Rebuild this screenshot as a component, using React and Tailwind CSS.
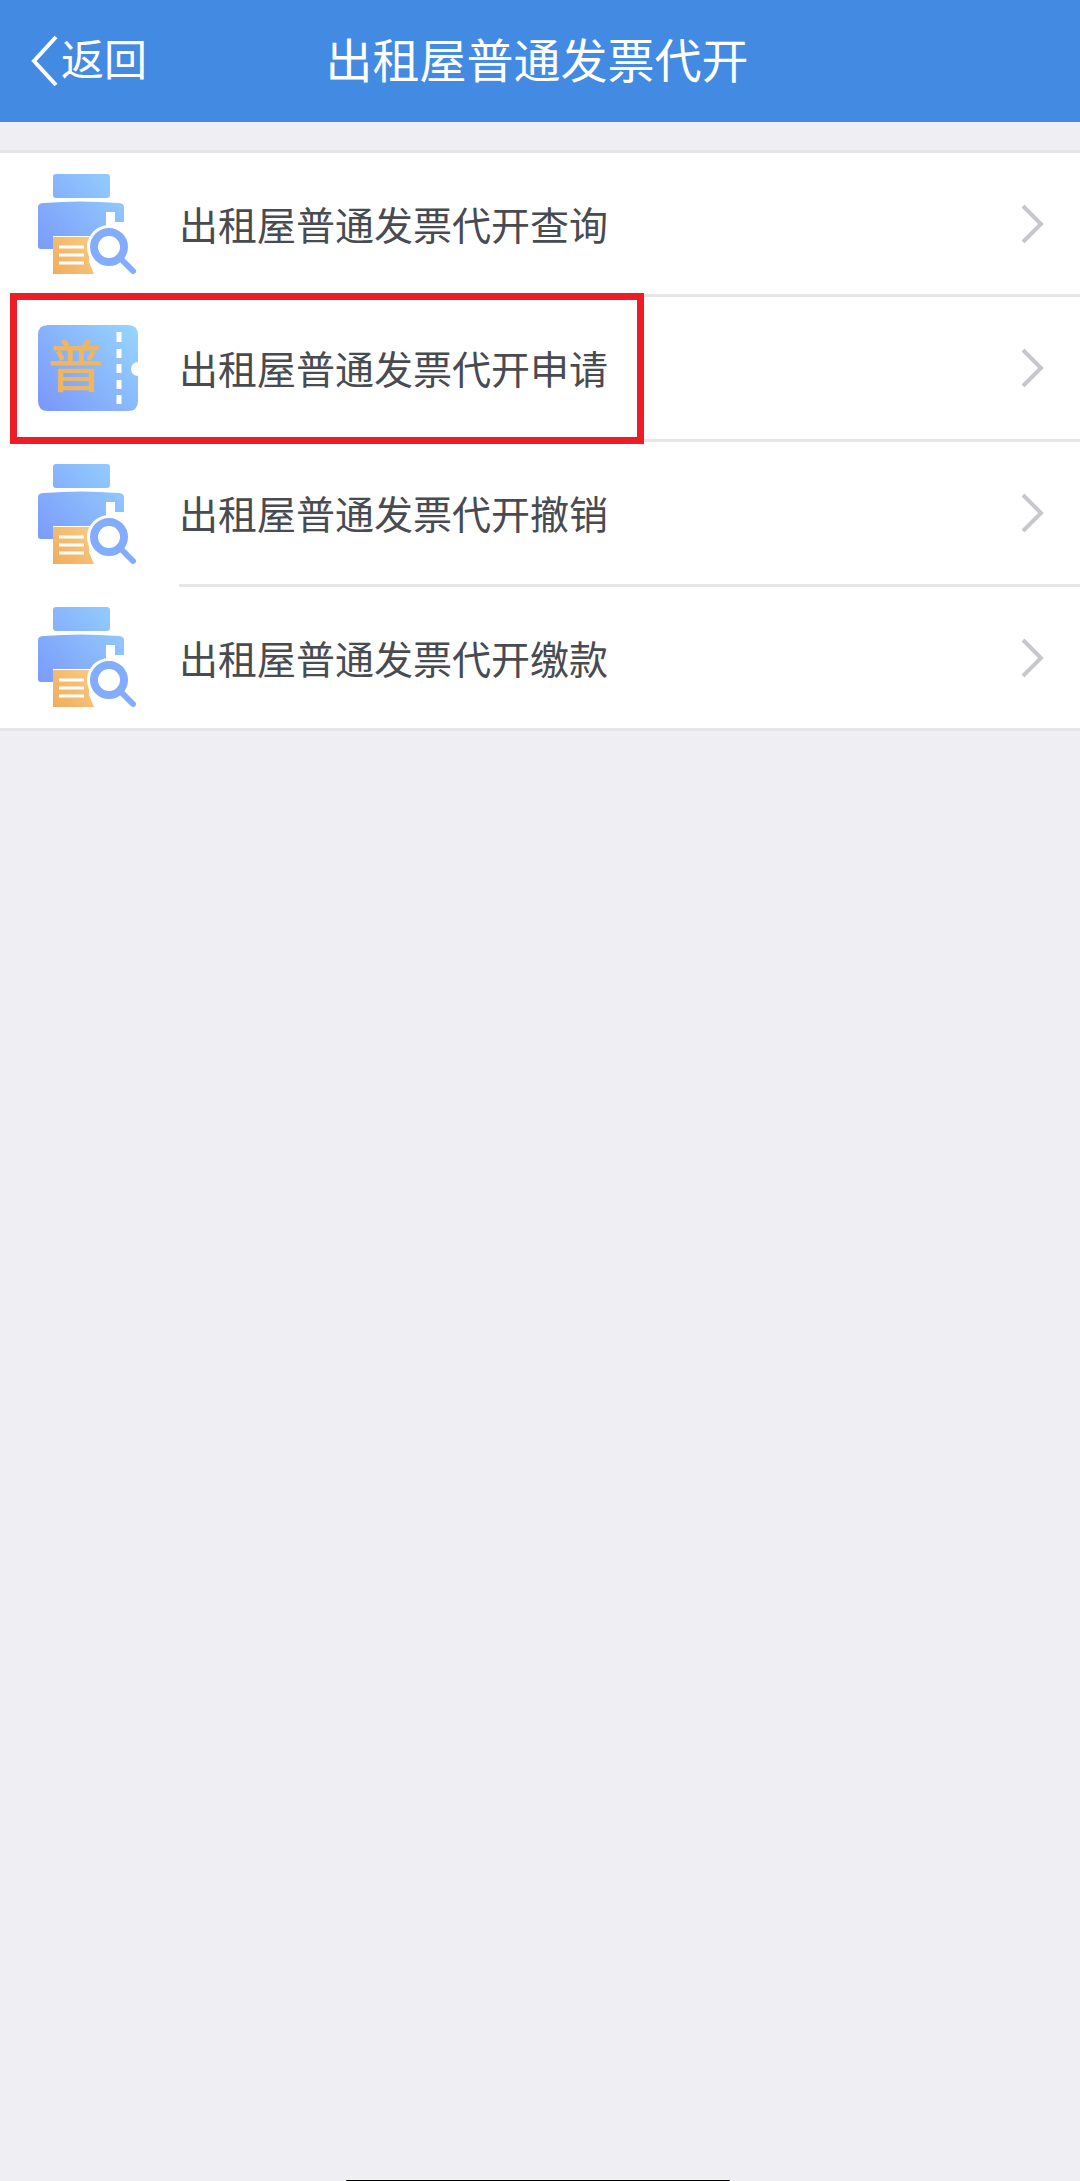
const rows = [
    { label: '出租屋普通发票代开查询', icon: 'printer', height: 'h-[144px]' },
    { label: '出租屋普通发票代开申请', icon: 'ticket', height: 'h-[145px]', highlighted: true },
    { label: '出租屋普通发票代开撤销', icon: 'printer', height: 'h-[145px]' },
    { label: '出租屋普通发票代开缴款', icon: 'printer', height: 'h-[141px]', last: true },
];

const PrinterIcon = ({ id }) => (
    <svg width="100" height="102" viewBox="0 0 100 102" fill="none">
        <defs>
            <linearGradient id={`${id}-blue`} x1="0" y1="75" x2="90" y2="0" gradientUnits="userSpaceOnUse">
                <stop offset="0" stopColor="#7b9bfb" />
                <stop offset="1" stopColor="#96d2fd" />
            </linearGradient>
            <linearGradient id={`${id}-orange`} x1="15" y1="100" x2="55" y2="65" gradientUnits="userSpaceOnUse">
                <stop offset="0" stopColor="#f0ad5c" />
                <stop offset="1" stopColor="#f8ca84" />
            </linearGradient>
        </defs>
        <rect x="15" y="0" width="57" height="24" rx="3" fill={`url(#${id}-blue)`} />
        <path
            d="M0 33 Q0 29 6 29 Q43 26 80 29 Q86 29 86 33 V48 H77 V38 H68 V62 H15 V75 H3 Q0 75 0 72 Z"
            fill={`url(#${id}-blue)`}
        />
        <path d="M15 63 H51 V88 L56 100 H15 Z" fill={`url(#${id}-orange)`} />
        <path d="M21 73 H46 M21 81 H46 M21 89 H46" stroke="#fff" strokeWidth="3" />
        <circle cx="71" cy="73" r="22" fill="#fff" />
        <circle cx="71" cy="73" r="15" stroke="#83adfc" strokeWidth="8" />
        <path d="M85 87 L95 97" stroke="#83adfc" strokeWidth="6" strokeLinecap="round" />
    </svg>
);

const TicketIcon = () => (
    <div className="relative mb-[3px] w-[100px] h-[86px]">
        <svg width="100" height="86" viewBox="0 0 100 86" fill="none">
            <defs>
                <linearGradient id="ticket-blue" x1="5" y1="86" x2="100" y2="0" gradientUnits="userSpaceOnUse">
                    <stop offset="0" stopColor="#7b97fb" />
                    <stop offset="1" stopColor="#97d6fe" />
                </linearGradient>
            </defs>
            <path
                d="M10 0 H90 Q100 0 100 10 V37 A7 7 0 0 0 100 51 V76 Q100 86 90 86 H10 Q0 86 0 76 V10 Q0 0 10 0 Z"
                fill="url(#ticket-blue)"
            />
            <path d="M81 7 V17 M81 24 V33 M81 39 V48 M81 55 V64 M81 70 V79" stroke="#fff" strokeWidth="5" />
        </svg>
        <span className="absolute inset-y-0 left-0 w-[76px] flex items-center justify-center text-[56px] leading-none font-medium text-[#eeb562]">
            普
        </span>
    </div>
);

const ChevronRight = () => (
    <svg width="23" height="40" viewBox="0 0 23 40" fill="none">
        <path d="M2 2 L20 20 L2 38" stroke="#c8c8cc" strokeWidth="4" />
    </svg>
);

export default function App() {
    return (
        <div className="h-[2181px] flex flex-col bg-[#eeeef3] font-['Liberation_Sans','Noto_Sans_CJK_SC',sans-serif]">
            {/* Header */}
            <header className="h-[122px] shrink-0 grid grid-cols-[1fr_auto_1fr] items-center bg-[#428ae2] text-white">
                <div className="flex items-center pl-[31px]">
                    <svg width="27" height="52" viewBox="0 0 27 52" fill="none">
                        <path d="M25 2 L3 26 L25 50" stroke="#fff" strokeWidth="4" />
                    </svg>
                    <span className="ml-[3px] text-[43px] leading-none">返回</span>
                </div>
                <h1 className="mr-[6px] text-[47px] leading-none font-normal">出租屋普通发票代开</h1>
                <div />
            </header>

            {/* Menu list */}
            <div className="mt-[28px] bg-white border-y-[3px] border-[#e6e6e6]">
                {rows.map((row, i) => (
                    <div key={row.label} className={`relative flex ${row.height}`}>
                        <div className="w-[179px] shrink-0 flex items-center pl-[38px]">
                            {row.icon === 'ticket' ? <TicketIcon /> : <PrinterIcon id={`printer-${i}`} />}
                        </div>
                        <div className={`flex-1 flex items-center justify-between pr-[36px] ${row.last ? '' : 'border-b-[3px] border-[#e6e6e6]'}`}>
                            <span className="pt-[5px] text-[39px] leading-none text-[#484b50]">{row.label}</span>
                            <ChevronRight />
                        </div>
                        {row.highlighted && (
                            <div className="absolute left-[10px] top-[-4px] w-[634px] h-[151px] border-[7px] border-[#ee1c25]" />
                        )}
                    </div>
                ))}
            </div>

            {/* Home indicator */}
            <div className="mt-auto ml-[346px] w-[384px] h-px rounded-t-sm bg-black" />
        </div>
    );
}
